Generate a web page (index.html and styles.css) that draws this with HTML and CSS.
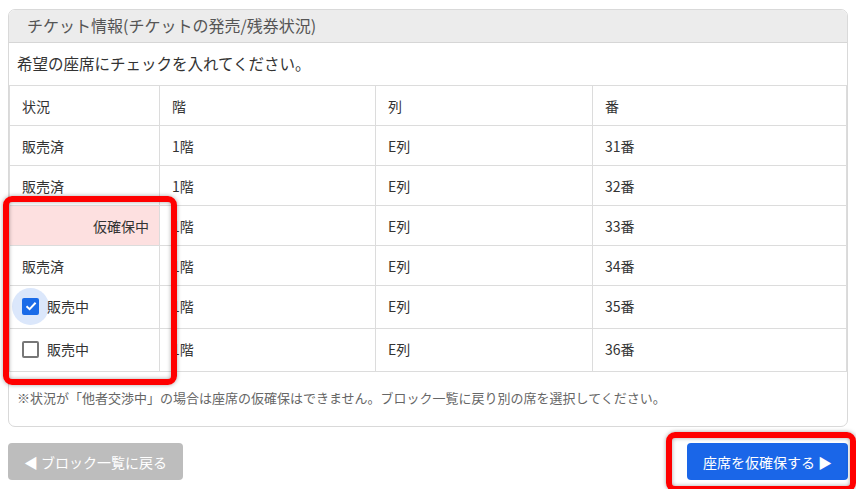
FILE: index.html
```html
<!DOCTYPE html>
<html lang="ja">
<head>
<meta charset="utf-8">
<link rel="stylesheet" href="styles.css">
</head>
<body>
<div class="page">
  <section class="card">
    <div class="card-head">チケット情報(チケットの発売/残券状況)</div>
    <div class="card-desc">希望の座席にチェックを入れてください。</div>
    <table class="seats">
      <colgroup><col class="c1"><col class="c2"><col class="c3"><col class="c4"></colgroup>
      <thead>
        <tr><th>状況</th><th>階</th><th>列</th><th>番</th></tr>
      </thead>
      <tbody>
        <tr><td>販売済</td><td>1階</td><td>E列</td><td>31番</td></tr>
        <tr><td>販売済</td><td>1階</td><td>E列</td><td>32番</td></tr>
        <tr><td class="held">仮確保中</td><td>1階</td><td>E列</td><td>33番</td></tr>
        <tr><td>販売済</td><td>1階</td><td>E列</td><td>34番</td></tr>
        <tr class="tall"><td><label class="chk"><span class="box on"><svg viewBox="0 0 16 16" width="16" height="16"><polyline points="3.5,8.3 6.6,11.2 12.6,4.8" fill="none" stroke="#fff" stroke-width="2"/></svg></span>販売中</label></td><td>1階</td><td>E列</td><td>35番</td></tr>
        <tr class="tall"><td><label class="chk"><span class="box"></span>販売中</label></td><td>1階</td><td>E列</td><td>36番</td></tr>
      </tbody>
    </table>
    <p class="note">※状況が「他者交渉中」の場合は座席の仮確保はできません。ブロック一覧に戻り別の席を選択してください。</p>
  </section>
  <div class="actions">
    <button class="btn btn-back">◀ ブロック一覧に戻る</button>
    <button class="btn btn-go">座席を仮確保する ▶</button>
  </div>
  <div class="mark mark-col"></div>
  <div class="mark mark-btn"></div>
</div>
</body>
</html>
```
FILE: styles.css
```css
* { box-sizing: border-box; }
html, body { margin: 0; padding: 0; background: #fff; }
body {
  font-family: "Noto Sans CJK JP", "Noto Sans", sans-serif;
  color: #333;
  width: 856px;
  height: 489px;
  overflow: hidden;
}
.page {
  position: relative;
  padding: 9px 8px 0 8px;
  height: 489px;
}
.card {
  border: 1px solid #d9d9d9;
  border-radius: 7px;
  overflow: hidden;
  background: #fff;
}
.card-head {
  height: 33px;
  background: #ececec;
  border-bottom: 1px solid #d6d6d6;
  padding-left: 18px;
  font-size: 16px;
  line-height: 31px;
  color: #555;
}
.card-desc {
  height: 42px;
  padding-left: 8px;
  font-size: 15.5px;
  line-height: 40px;
  color: #333;
}
.seats {
  border-collapse: collapse;
  width: 838px;
  margin: 0;
  table-layout: fixed;
  font-size: 14px;
}
.seats col.c1 { width: 150px; }
.seats col.c2 { width: 216px; }
.seats col.c3 { width: 217px; }
.seats col.c4 { width: auto; }
.seats th, .seats td {
  border: 1px solid #dcdcdc;
  height: 40px;
  padding: 0 12px;
  text-align: left;
  font-weight: normal;
  color: #333;
  vertical-align: middle;
}
.seats tr.tall td { height: 43px; padding-bottom: 2px; }
.seats td.held {
  background: #fde0e0;
  text-align: right;
  padding-right: 10px;
}
.chk {
  position: relative;
  z-index: 0;
  display: flex;
  align-items: center;
  gap: 8px;
}
.box {
  position: relative;
  width: 17px;
  height: 17px;
  border: 2px solid #777;
  border-radius: 2px;
  display: inline-flex;
  align-items: center;
  justify-content: center;
  flex: none;
}
.box.on {
  border: none;
  background: #1a6be8;
}
.box.on::before {
  content: "";
  position: absolute;
  left: -10px;
  top: -10px;
  width: 37px;
  height: 37px;
  border-radius: 50%;
  background: #dbe7fb;
  z-index: -1;
}
.box svg { display: block; }
.note {
  margin: 0;
  padding: 17px 8px 19px;
  font-size: 13px;
  line-height: 18px;
  color: #666;
}
.actions {
  display: flex;
  justify-content: space-between;
  margin-top: 16px;
}
.btn {
  font-family: inherit;
  font-size: 14px;
  color: #fff;
  border: none;
  border-radius: 4px;
  height: 37px;
  padding: 0;
  cursor: pointer;
}
.btn-back {
  width: 175px;
  background: #bdbdbd;
}
.btn-go {
  width: 161px;
  background: #1a66e8;
}
.mark {
  position: absolute;
  border: 6px solid #ff0000;
  border-radius: 9px;
  box-shadow: 0 0 4px rgba(0,0,0,0.35), inset 0 0 4px rgba(0,0,0,0.35);
  pointer-events: none;
}
.mark-col {
  left: 3px;
  top: 196px;
  width: 174px;
  height: 189px;
}
.mark-btn {
  left: 666px;
  top: 432px;
  width: 190px;
  height: 60px;
}
```
